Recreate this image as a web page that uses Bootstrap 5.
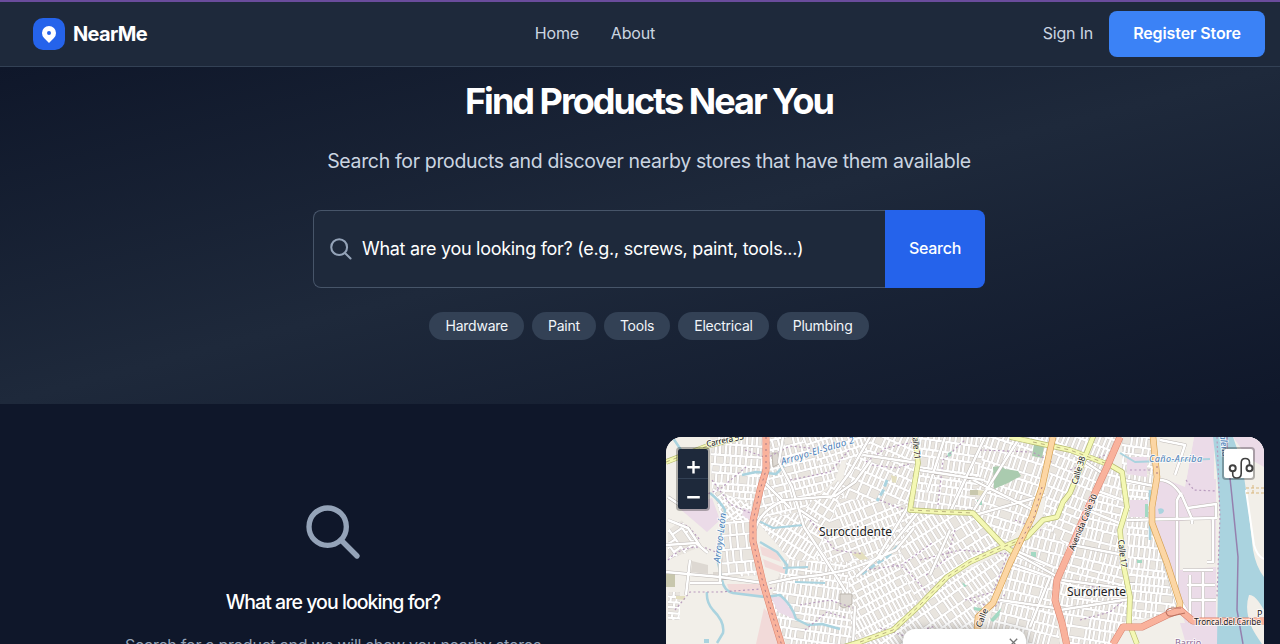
<!DOCTYPE html>
<html lang="en">
<head>
<meta charset="utf-8">
<meta name="viewport" content="width=device-width, initial-scale=1">
<title>NearMe</title>
<link href="https://cdn.jsdelivr.net/npm/bootstrap@5.3.0/dist/css/bootstrap.min.css" rel="stylesheet">
<style>
html,body{height:100%;overflow:hidden}
body{background:#0f172a;color:#fff;font-family:Inter,"Liberation Sans",sans-serif;font-size:16px}
.page-pad{padding-left:33px;padding-right:15px}
.topbar{height:67px;background:#1e293b;border-top:2px solid #6a4c9c;border-bottom:1px solid #334155;--bs-navbar-padding-y:0}
.brand-icon{width:32px;height:32px;border-radius:10px;background:#2563eb}
.brand-name{font-size:20px;font-weight:700;letter-spacing:-.65px}
.topbar .nav-link{color:#cbd5e1;padding:0 0 2px;letter-spacing:-.2px}
.links{gap:32px}
.btn-register{--bs-btn-bg:#3b82f6;--bs-btn-color:#fff;--bs-btn-border-width:0;--bs-btn-border-radius:8px;height:46px;width:156px;font-weight:600;padding:0 0 2px;letter-spacing:-.1px}
.hero{height:337px;background:linear-gradient(to bottom right,#0f172a,#1e293b 50%,#0f172a);padding-top:11px}
.hero h1{font-size:36px;font-weight:700;letter-spacing:-1.99px;line-height:46px}
.hero-sub{font-size:19.5px;line-height:30px;color:#cbd5e1;margin-top:22px;letter-spacing:-.34px}
.searchbox{width:672px;height:78px;margin-top:34px}
.search-field{background:#1e293b;border:1px solid #475569;border-right:0;border-radius:8px 0 0 8px;padding-left:14px;font-size:18px}
.field-label{margin-left:8px;padding-bottom:2px;letter-spacing:-.29px}
.btn-search{--bs-btn-bg:#2563eb;--bs-btn-color:#fff;--bs-btn-border-width:0;width:100px;border-radius:0 8px 8px 0;font-weight:500;padding:0 0 2px;letter-spacing:-.3px}
.tags{margin-top:24px}
.tag{background:#334155;color:#f1f5f9;font-size:14px;line-height:20px;padding:4px 0;letter-spacing:-.235px}
.results{display:grid;grid-template-columns:600px 598px;gap:33px;padding-top:33px}
.empty-state{padding-top:63px}
.empty-state h3{font-size:19.5px;line-height:28px;font-weight:500;margin:24px 0 0;letter-spacing:-.95px}
.empty-state p{font-size:16px;line-height:26px;color:#94a3b8;margin:16px 0 0;letter-spacing:-.24px}
.map{height:500px;border-radius:16px;background:#f2efe9}
.map>svg{display:block}
.map-ctl{border:2px solid rgba(0,0,0,.28);background-clip:padding-box;border-radius:4px}
.zoom-ctl{left:10px;top:10px;width:34px}
.zoom-ctl button{width:30px;height:30px;background:#1e293b}
.zoom-ctl button svg{margin-top:6px}
.zoom-ctl button:first-child{border-bottom:1px solid #334155!important;border-radius:2px 2px 0 0}
.zoom-ctl button:last-child{border-radius:0 0 2px 2px}
.route-ctl{left:556px;top:10px;width:33px;height:33px;background-color:#fff}
.popup-card{left:237px;top:192px;width:123px;height:70px;border-radius:12px;box-shadow:0 3px 14px rgba(0,0,0,.4)}
.popup-card svg{right:8px;top:9px}
.map text{font-family:"Noto Sans",sans-serif;paint-order:stroke;stroke:#fff;stroke-opacity:.7;stroke-width:2px;fill:#222}
.map .wt{fill:#4b80b9;font-style:italic}
</style>
</head>
<body>
<nav class="navbar topbar page-pad flex-nowrap justify-content-between">
  <a class="d-flex align-items-center gap-2 text-white text-decoration-none" href="#">
    <span class="brand-icon d-flex align-items-center justify-content-center"><svg width="20" height="20" viewBox="0 0 20 20"><path fill="#fff" fill-rule="evenodd" d="M5.05 4.05a7 7 0 1 1 9.9 9.9L10 18.9l-4.95-4.95a7 7 0 0 1 0-9.9zM10 11a2 2 0 1 0 0-4 2 2 0 0 0 0 4z"/></svg></span>
    <span class="brand-name">NearMe</span>
  </a>
  <div class="links d-flex"><a class="nav-link" href="#">Home</a><a class="nav-link" href="#">About</a></div>
  <div class="d-flex align-items-center gap-3"><a class="nav-link" href="#">Sign In</a><button class="btn btn-register">Register Store</button></div>
</nav>

<section class="hero page-pad d-flex flex-column align-items-center">
  <h1 class="m-0">Find Products Near You</h1>
  <p class="hero-sub mb-0">Search for products and discover nearby stores that have them available</p>
  <div class="searchbox d-flex">
    <div class="search-field flex-grow-1 d-flex align-items-center">
      <svg width="26" height="26" viewBox="0 0 24 24" fill="none" stroke="#94a3b8" stroke-width="1.9" stroke-linecap="round"><circle cx="10.300" cy="10.300" r="7.3"/><path d="M15.600 15.600 20.800 20.800"/></svg>
      <span class="field-label">What are you looking for? (e.g., screws, paint, tools...)</span>
    </div>
    <button class="btn btn-search">Search</button>
  </div>
  <div class="tags d-flex gap-2">
    <span class="tag rounded-pill px-3">Hardware</span><span class="tag rounded-pill px-3">Paint</span><span class="tag rounded-pill px-3">Tools</span><span class="tag rounded-pill px-3">Electrical</span><span class="tag rounded-pill px-3">Plumbing</span>
  </div>
</section>

<main class="results page-pad">
  <div class="empty-state text-center">
    <svg width="64" height="64" viewBox="0 0 24 24" fill="none" stroke="#94a3b8" stroke-width="2" stroke-linecap="round"><circle cx="10" cy="10" r="7"/><path d="m15 15 6 6"/></svg>
    <h3>What are you looking for?</h3>
    <p>Search for a product and we will show you nearby stores</p>
  </div>
  <div class="map position-relative overflow-hidden">
    <svg width="598" height="207" viewBox="666 437 598 207" fill="none" stroke-linejoin="round">
      <rect x="666" y="437" width="598" height="207" fill="#f2efe9"/>
      <g id="streets"></g>
      <!-- land use -->
      <g fill="#ebdbe8">
        <path d="M679 508 712 498 720 520 707 532zM744 508l12 6v10l-14-9z"/>
        <path d="M771 597h11l11 16 3 7-18-8zM1127 457h20v20l-20-3zM1156 479h60v144h-31l-18-60-14-40zM1194 437h20v45h-28zM1130 500h18v17h-18zM1233 437h31v30l-16-9zM1180 623h38v21h-32z"/>
      </g>
      <path fill="#f2dad9" d="M760 546l17 6 4 10-19-7zM763 559l22 9v6l-20-7zM727 584h36l5 12-38-3zM764 608l10 12 8 24h-26z"/>
      <path fill="#f2efe9" d="M1180 521l30-4 6 50-36 3zM1160 437h34l-9 50-20-8z"/>
      <path fill="#aacbaf" d="M993 467q9-2 12 2l13 2 3 5-13 7-14 6zM1034 444l10 3-2 11-10-2z"/>
      <path fill="#a3d9c3" d="M948 453l4-2-1 5-4 1zM977 500h5v5h-5zM974 607l12 2-2 3-10-2zM1031 552h5v5h-5zM962 582l5 4-3 1zM1145 504h3v13h-3zM1137 560h5v3h-5zM990 620l11-12-2 8-6 6z"/>
      <path fill="#e4dfbf" d="M852 554l10-2 6 7-8 1zM891 475l6 2-1 6-4-1zM978 490l8 1-3 5-6-1zM1018 502l7 2-1 3-6-2zM676 596h9v4l-9-1z"/>
      <path fill="#c8c7ad" d="M666 574h9v13h-9zM970 490h8v5h-8z"/>
      <path fill="#ddd8d2" d="M692 561l16 4v9l-17-2zM713 572h8v7l-8-1z"/>
      <path fill="#ddd8d2" stroke="#bbb5ad" d="M840 594h12v10l-8 4-4-2zM772 453h6l1 11-6 3z"/>
      <!-- water -->
      <path fill="#aad3df" d="M1213 437l4 36 3 40-2 67-1 64h45q-7-10-10-16-8-18-3-33 6-1 15 15v-33q-8-10-11-27l-6-53-5-34-9-26z"/>
      <path fill="#aad3df" d="M1158 509q4-2 6 1 0 4-5 4zM704 639h5v4h-5z"/>
      <g stroke="#aad3df" stroke-width="2.5">
        <path d="M673 438l8 12M710 493q10 8 15 17l-8 48 5 22q2 11 11 13l32 4 15-2q12 10 16 24l12 6 14-1 18 5"/>
        <path d="M707 592q-1 10 6 18 12 12 10 23l-6 10M760 542l17 10 10 13-1 9M742 475l14-3 20 2 8-8" />
        <path d="M1120 453l15 9 75-3M753 518l20 10 30-3M783 568l25-1M795 582l30 1" stroke-width="2"/>
        <path d="M887 480l-4 11-6 10M898 546l-12 12-10 6-14 10" stroke-width="3" stroke-dasharray="7 3"/>
        <path d="M1150 490v50" />
      </g>
      <path d="M1246 490l8 55q3 11 10 14" stroke="#fff" stroke-width="2"/>
      <path d="M1246 488h18M1246 493h18M1253 485v8" stroke="#d9b77e" stroke-dasharray="3 2"/>
      <!-- pedestrian and service ways -->
      <path stroke="#b79abd" stroke-width="1.2" stroke-dasharray="2 2.5" d="M668 520l20 6 12 14M668 560q15-16 38-12l12 5M675 610l15-18 30 0 55-4M712 480l18 24 20 9M745 450l22 8 23-12 28 3M790 480l40-8 20-23M810 520l25 30 28 4M872 465l25 3 18-6M865 570l37-5 30-22M938 505l5-45 22-20M920 560l40-10 48 4-15 38-28 8M970 600l24 8 12-15M980 450l52 2 20 10M1015 520l26 10M1075 580l40 15M1070 470l35-15M1130 470h28M1186 480l8 10 22 1M1217 437l3 80-3 80M880 500l16 7 14 3M800 605l30-5 26 9M866 462l20-14 28-6M925 590l-20-22-14-4M955 530l-8 28-22 18M805 630l22-18 20 6M700 497l20-8 26-22M880 628l25 8 30-10M1080 620l30-8 16-14"/>
      <!-- white roads -->
      <g id="whiteroads"></g>
      <!-- main roads -->
      <g stroke="#b6bb70" stroke-width="5.5"><use href="#yel"/></g>
      <g stroke="#f4f8b4" stroke-width="4.2"><path id="yel" d="M666 462l44-17 33-8M915 437l3 26-8 47 30 2 33 1 30 32 10 7M840 648l20-6 33-12 27-25 27-28 23-15 33-15 24-10 16-17 14-3 6-15 7-9 17-41 8-20M1010 437l23 5 37 8 40 15 12 7 5 35-7 23 3 33 7 34-1 26 8 21"/></g>
      <path stroke="#b9b17d" stroke-dasharray="4 4" d="M666 462l44-17M910 510l63 3M860 642l33-12 27-25 27-28 23-15 33-15 24-10M1033 442l37 8 40 15"/>
      <g stroke-width="6.5" stroke="#d29d4d"><use href="#orgline"/></g>
      <g stroke-width="5.3" stroke="#fcd6a4"><path id="orgline" d="M1053 437l-11 50-10 30-22 46-17 40-15 14-1 14M1153 437l4 40-5 30v16l15 40 13 40-1 9"/></g>
      <g stroke-width="7" stroke="#d98370"><use href="#redline"/></g>
      <g stroke-width="6" stroke="#f9b29c"><path id="redline" d="M766 437v33l-6 20-7 31v20l10 42 10 34 9 29M1120 437l-13 30-20 43-17 40-13 30-2 20 7 23 5 23M1113 644l10-17h19l25-12 13-5 13 11h71"/></g>
      <path d="M1181 608h-9q-6 1-6 4 1 5 6 4l13-3" stroke="#b9705e" stroke-width="1.2"/>
      <path stroke="#a87983" stroke-dasharray="2 4" d="M766 437v33l-6 20-7 31v20l10 42 10 34 9 29M1042 487l-8 30-15 27M1157 460v18"/>
      <path d="M1227 437v13l5 47 6 60-1 53 6 34" stroke="#9580ae" stroke-width="1.5"/>
      <!-- labels -->
      <text x="819" y="536" font-size="12" textLength="73">Suroccidente</text>
      <text x="1067" y="596" font-size="12" textLength="59">Suroriente</text>
      <g font-size="8.5">
        <text transform="translate(707 447) rotate(-12)" textLength="38">Carrera 53</text>
        <text transform="translate(912 433) rotate(84)" textLength="27">Calle 71</text>
        <text transform="translate(1077 485) rotate(-73)" textLength="29">Calle 38</text>
        <text transform="translate(1074 551) rotate(-67)" textLength="60">Avenida Calle 30</text>
        <text transform="translate(1118 540) rotate(83)" textLength="28">Calle 17</text>
        <text transform="translate(981 628) rotate(-68)">Calle</text>
        <text x="1194" y="625" textLength="67">Troncal.del.Caribe</text>
        <text x="1257" y="617" font-size="9">P</text>
        <text class="wt" font-size="9.5" transform="translate(782 465) rotate(-17)" textLength="76">Arroyo-El-Salao 2</text>
        <text class="wt" font-size="9.5" transform="translate(720 563) rotate(-83)" textLength="50">Arroyo-León</text>
        <text class="wt" font-size="9" x="1149" y="462" textLength="53">Caño-Arriba</text>
        <text class="wt" font-size="9" transform="translate(1217 412) rotate(83)">Magdalena</text>
        <text x="1175" y="646" font-size="9" style="fill:#8d6b97">Barrio</text>
      </g>
    </svg>
    <div class="zoom-ctl map-ctl position-absolute">
      <button class="d-flex border-0 p-0 align-items-center justify-content-center" aria-label="Zoom in"><svg width="14" height="14" stroke="#fff" stroke-width="2.4"><path d="M7.5 1v12.5M1.2 7.2h12.6"/></svg></button>
      <button class="d-flex border-0 p-0 align-items-center justify-content-center" aria-label="Zoom out"><svg width="14" height="14" stroke="#fff" stroke-width="2.4"><path d="M1.2 7.2h12.6"/></svg></button>
    </div>
    <div class="route-ctl map-ctl position-absolute"></div>
    <svg class="position-absolute" style="left:562px;top:19px" width="27" height="26" fill="none" stroke="#404040" stroke-width="2"><circle cx="4.700" cy="12.300" r="3"/><circle cx="21.500" cy="12.300" r="3"/><path d="M4.700 15v3q0 4 4 4 4.500 0 4.500-4.500V7q0-4.500 4-4.500 4.300 0 4.300 4V9" stroke-width="1.600"/></svg>
    <div class="popup-card position-absolute bg-white"><svg class="position-absolute" width="9" height="9" stroke="#757575" stroke-width="1.3"><path d="M.8.8l7.400 7.400M8.200.8.8 8.200"/></svg></div>
  </div>
</main>
<script>
// Residential street grids: each district is [outline, angle, row height, block width]
const districts = [
 ["M710 437H764V475L752 508 712 488z",4,9,5],
 ["M712 488 752 505 748 521 722 520z",-35,5,4],
 ["M722 520H750L760 575 722 578z",-5,11,7],
 ["M769 437H850L835 480 800 512 756 520 763 485z",-14,9,5],
 ["M850 437H915L916 465 908 505 840 500z",24,10,5],
 ["M756 520 800 512 838 480 850 510 815 560 790 560z",32,9,4.500],
 ["M840 498 908 505 905 555 860 570 815 560z",-22,9,5],
 ["M785 560 850 562 857 644H786L770 600z",8,9,4.500],
 ["M847 562 903 553 918 604 890 630 852 640z",-28,9,4.500],
 ["M919 437H985L975 512 911 509z",8,9,5],
 ["M905 512H972L1000 545 945 575 918 602 900 570z",-32,10,5],
 ["M985 437H1051L1040 490 1028 520 1005 544 973 512z",18,10,5],
 ["M1010 550 1055 520 1068 548 1055 580 1056 610 1060 644H978L995 605z",14,10,5],
 ["M920 606 948 578 1009 550 992 603 976 616 972 644H865z",-35,9,4.500],
 ["M1055 437H1118L1104 470 1068 548 1042 520z",22,10,5],
 ["M1122 437H1152L1155 475 1122 472z",8,10,5],
 ["M1108 468 1122 474 1126 507 1119 530 1127 597 1060 598 1058 578z",14,9,5],
 ["M1058 598H1129L1129 625 1113 644H1068z",9,8,4.500],
 ["M1124 475H1153L1150 510 1151 525 1165 564 1178 604 1165 615 1131 621z",6,9,4.500],
 ["M1185 560H1216V620H1190z",1,14,15],
 ["M668 530 682 520 698 548 668 560z",55,12,9],
 ["M668 592H680V620H668z",4,5,7],
 ["M800 437H870V455L820 465z",-18,9,5]
];
let seed = 7;
const rnd = () => (seed = (seed * 16807) % 2147483647) / 2147483647;
let out = "";
districts.forEach(([shape, angle, row, block], i) => {
  const n = shape.match(/[\d.]+/g).map(Number);
  const cx = n[0], cy = n[1] + 40;
  let d = "";
  for (let y = -190; y < 190;) {
    const h = row * (.7 + rnd() * .7);
    d += `M-190 ${y.toFixed(1)}H190`;
    for (let x = -190 + rnd() * block; x < 190; x += block * (.8 + rnd() * .5))
      if (rnd() > .1) d += `M${x.toFixed(1)} ${y.toFixed(1)}v${h.toFixed(1)}`;
    y += h;
  }
  out += `<clipPath id="d${i}"><path d="${shape}"/></clipPath><g clip-path="url(#d${i})"><path fill="#e9e5df" d="${shape}"/><g transform="translate(${cx} ${cy}) rotate(${angle})"><path d="${d}" stroke="#cbc7c5" stroke-width="3.1"/><path d="${d}" stroke="#fff" stroke-width="2.2"/></g></g>`;
});
document.getElementById("streets").innerHTML = out;
// Secondary streets, drawn once as casing and once as fill
const roads = "M666 572l54 5 43 6M769 583l24-5 27-3 27-5 22-8 27-12 18-22M755 530q5-20 30-30l50-4 20-14 16-22M783 437l-4 25 13 25 12 40 20 30 22 35M760 478l30 30M800 510l18 12M853 644l2-38M870 437l-20 35-20 27M918 463l-55-8M908 507l-30 50-22 20M880 560l40-50M930 575l20-45M945 437l-18 55M919 470l65 10M985 437l-35 75M1020 437l-48 76M973 480l60 30M1013 552l45 25M1003 545l50 22M1000 600l55 8M1010 563l40 14-20 50M975 515l70-20M1075 455l30 20M1087 510l35 14M1072 545l52 10M1062 580l66 9M1060 610l70-11M1095 490l28 10M1124 480l30 6M1127 520l90-2M1160 480q12 0 22 16l10 23v5M1188 508l28-4v13M1182 493q-6 6-5 10v100M1160 440l25 5-10 30M1183 570h30M1187 585h28M1190 600h26M1190 575v48M1203 572v47M1180 600l12 20M1153 525l25 82M1213 517v45h-6M666 545l30-2 12 10M668 520l20 8 12 18M668 497l12 8M690 560l-4 35M720 558v25M690 583h32";
document.getElementById("whiteroads").innerHTML = `<path d="${roads}" stroke="#bdb8b5" stroke-width="3.400"/><path d="${roads}" stroke="#fff" stroke-width="2.500"/>`;
</script>
<script src="https://cdn.jsdelivr.net/npm/bootstrap@5.3.0/dist/js/bootstrap.bundle.min.js"></script>
</body>
</html>
